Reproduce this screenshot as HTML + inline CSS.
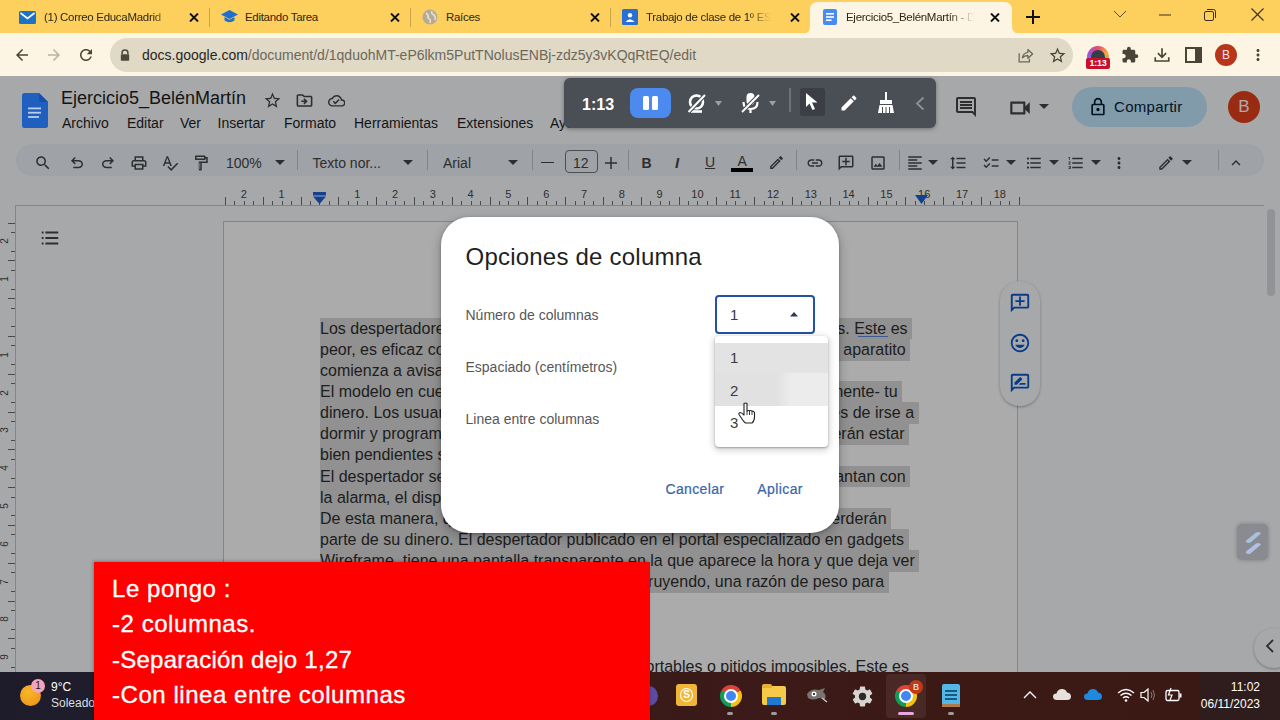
<!DOCTYPE html>
<html><head><meta charset="utf-8">
<style>
*{box-sizing:border-box;margin:0;padding:0}
html,body{width:1280px;height:720px;overflow:hidden;background:#f9fbfd;font-family:"Liberation Sans",sans-serif;position:relative}
.a{position:absolute}
svg{display:block}
.tabs{left:0;top:0;width:1280px;height:33px;background:#fdd05e}
.tbar{left:0;top:33px;width:1280px;height:43px;background:#fcf5e3}
.tabt{font-size:11.5px;letter-spacing:-0.3px;line-height:1;color:#2e2616;white-space:nowrap;top:11.5px}
.tsep{width:1px;height:19px;top:8px;background:#c9a54a}
.omni{left:109.5px;top:38px;width:963.5px;height:33.7px;border-radius:17px;background:#dfd9c6}
.docs{left:0;top:76px;width:1280px;height:596px;background:#f9fbfd;overflow:hidden}
.menu{font-size:14px;color:#1f1f1f;top:38px;white-space:nowrap}
.pill{left:16px;top:68px;width:1248px;height:32px;border-radius:16px;background:#edf2fa}
.ti{top:74px}
.sep{width:1px;height:20px;top:74px;background:#c7c7c7}
.page{left:223px;top:145px;width:795px;height:520px;background:#fff;border-left:1px solid #c6c6c6;border-right:1px solid #c6c6c6;border-top:1px solid #c6c6c6}
.ln{left:320px;font-size:16.03px;color:#2e2e2e;white-space:nowrap;height:21.8px;line-height:21.13px}
.hl{background:#d9d9d9}
.overlay{left:0;top:76px;width:1280px;height:596px;background:rgba(0,0,0,0.33)}
.task{left:0;top:672px;width:1280px;height:48px;background:linear-gradient(90deg,#1e1c2b 0%,#1f1c2c 7.5%,#3a1a1a 50%,#3c1914 77%,#3a1914 93.7%,#2f1c1c 93.8%,#2f1c1c 100%)}
</style></head><body>

<!-- TAB STRIP -->
<div class="a tabs"></div>
<!-- active tab -->
<div class="a" style="left:802px;top:1px;width:218px;height:33px;">
  <svg width="218" height="33" viewBox="0 0 218 33"><path d="M0 33 Q8 33 8 25 L8 9 Q8 1 16 1 L202 1 Q210 1 210 9 L210 25 Q210 33 218 33 Z" fill="#fcf5e3"/></svg>
</div>
<!-- tab1 -->
<svg class="a" style="left:19px;top:11px" width="17" height="13" viewBox="0 0 17 13"><rect x="0" y="0" width="17" height="13" rx="1.5" fill="#1a73c8"/><path d="M1.5 2 L8.5 7.5 L15.5 2" stroke="#fff" stroke-width="1.6" fill="none"/></svg>
<div class="a tabt" style="left:44px;width:128px;overflow:hidden;-webkit-mask-image:linear-gradient(90deg,#000 85%,transparent)">(1) Correo EducaMadrid</div>
<svg class="a" style="left:189px;top:12.5px" width="10" height="9" viewBox="0 0 10 9"><path d="M1 0.5L9 8.5M9 0.5L1 8.5" stroke="#111" stroke-width="1.9"/></svg>
<div class="a tsep" style="left:209px"></div>
<!-- tab2 -->
<svg class="a" style="left:221px;top:10px" width="17" height="14" viewBox="0 0 17 14"><path d="M8.5 0 L17 4.5 L8.5 9 L0 4.5Z" fill="#1f6fd0"/><path d="M3.5 7 L3.5 10.5 Q8.5 14 13.5 10.5 L13.5 7 L8.5 9.7Z" fill="#1f6fd0"/></svg>
<div class="a tabt" style="left:245px">Editando Tarea</div>
<svg class="a" style="left:390px;top:12.5px" width="10" height="9" viewBox="0 0 10 9"><path d="M1 0.5L9 8.5M9 0.5L1 8.5" stroke="#111" stroke-width="1.9"/></svg>
<div class="a tsep" style="left:410px"></div>
<!-- tab3 -->
<svg class="a" style="left:422px;top:9px" width="16" height="16" viewBox="0 0 16 16"><circle cx="8" cy="8" r="7.5" fill="#b3aa9a"/><path d="M4 4 Q7 6 6 9 Q9 10 8 14 M10 2 Q9 5 12 6 Q14 8 13 11" stroke="#e8dcc0" stroke-width="1.8" fill="none"/></svg>
<div class="a tabt" style="left:446px">Raíces</div>
<svg class="a" style="left:590px;top:12.5px" width="10" height="9" viewBox="0 0 10 9"><path d="M1 0.5L9 8.5M9 0.5L1 8.5" stroke="#111" stroke-width="1.9"/></svg>
<div class="a tsep" style="left:610px"></div>
<!-- tab4 -->
<svg class="a" style="left:622px;top:9px" width="16" height="16" viewBox="0 0 16 16"><rect width="16" height="16" rx="1.5" fill="#2a6fd6"/><circle cx="8" cy="6.3" r="2.2" fill="#fff"/><path d="M3.5 13 Q8 7.5 12.5 13Z" fill="#fff"/></svg>
<div class="a tabt" style="left:646px;width:125px;overflow:hidden;-webkit-mask-image:linear-gradient(90deg,#000 82%,transparent)">Trabajo de clase de 1º ESO</div>
<svg class="a" style="left:790px;top:12.5px" width="10" height="9" viewBox="0 0 10 9"><path d="M1 0.5L9 8.5M9 0.5L1 8.5" stroke="#111" stroke-width="1.9"/></svg>
<!-- tab5 active -->
<svg class="a" style="left:822px;top:9px" width="16" height="16" viewBox="0 0 16 16"><rect x="1" y="0" width="14" height="16" rx="2" fill="#4a8af4"/><rect x="4" y="4" width="8" height="1.6" fill="#fff"/><rect x="4" y="7.2" width="8" height="1.6" fill="#fff"/><rect x="4" y="10.4" width="5.5" height="1.6" fill="#fff"/></svg>
<div class="a tabt" style="left:846px;width:128px;overflow:hidden;-webkit-mask-image:linear-gradient(90deg,#000 80%,transparent)">Ejercicio5_BelénMartín - Documentos</div>
<svg class="a" style="left:990px;top:12.5px" width="10" height="9" viewBox="0 0 10 9"><path d="M1 0.5L9 8.5M9 0.5L1 8.5" stroke="#111" stroke-width="1.9"/></svg>
<svg class="a" style="left:1026px;top:10px" width="14" height="14" viewBox="0 0 14 14"><path d="M7 0V14M0 7H14" stroke="#111" stroke-width="2"/></svg>
<!-- window controls -->
<svg class="a" style="left:1113px;top:10px" width="14" height="8" viewBox="0 0 14 8"><path d="M1 1L7 7L13 1" stroke="#5a4a20" stroke-width="1" fill="none"/></svg>
<svg class="a" style="left:1159px;top:14px" width="12" height="2" viewBox="0 0 12 2"><path d="M0 1H12" stroke="#3a3020" stroke-width="1"/></svg>
<svg class="a" style="left:1204px;top:9px" width="12" height="12" viewBox="0 0 12 12"><rect x="0.5" y="2.5" width="9" height="9" rx="1.5" fill="none" stroke="#3a3020"/><path d="M3 0.5H9.5Q11.5 0.5 11.5 2.5V9" fill="none" stroke="#3a3020"/></svg>
<svg class="a" style="left:1251px;top:8px" width="13" height="13" viewBox="0 0 13 13"><path d="M0.5 0.5L12.5 12.5M12.5 0.5L0.5 12.5" stroke="#3a3020" stroke-width="1.1"/></svg>

<div class="a tbar"></div>
<div class="a omni"></div>
<!-- nav buttons -->
<svg class="a" style="left:13px;top:46px" width="18" height="18" viewBox="0 0 24 24"><path d="M20 11H7.83l5.59-5.59L12 4l-8 8 8 8 1.41-1.41L7.83 13H20v-2z" fill="#4a4438"/></svg>
<svg class="a" style="left:45px;top:46px" width="18" height="18" viewBox="0 0 24 24"><path d="M12 4l-1.41 1.41L16.17 11H4v2h12.17l-5.58 5.59L12 20l8-8z" fill="#b9b2a2"/></svg>
<svg class="a" style="left:77px;top:46px" width="18" height="18" viewBox="0 0 24 24"><path d="M17.65 6.35C16.2 4.9 14.21 4 12 4c-4.42 0-7.99 3.58-7.99 8s3.57 8 7.99 8c3.73 0 6.84-2.55 7.73-6h-2.08c-.82 2.33-3.04 4-5.65 4-3.31 0-6-2.69-6-6s2.69-6 6-6c1.66 0 3.14.69 4.22 1.78L13 11h7V4l-2.35 2.35z" fill="#4a4438"/></svg>
<!-- lock -->
<svg class="a" style="left:120px;top:49px" width="10" height="12" viewBox="0 0 12 14"><path d="M2.5 6V4.2Q2.5 1 6 1Q9.5 1 9.5 4.2V6" stroke="#4d473c" stroke-width="1.8" fill="none"/><rect x="1" y="6" width="10" height="8" rx="1" fill="#4d473c"/></svg>
<div class="a" style="left:142px;top:47px;font-size:14px;white-space:nowrap;color:#6e685c"><span style="color:#2a261e">docs.google.com</span>/document/d/1qduohMT-eP6lkm5PutTNolusENBj-zdz5y3vKQqRtEQ/edit</div>
<!-- share & star -->
<svg class="a" style="left:1016px;top:46px" width="19" height="19" viewBox="0 0 24 24"><path d="M4 9V20H17V16" stroke="#6c6658" stroke-width="1.6" fill="none"/><path d="M8 15Q9 9 15 8V4.5L21 10L15 15.5V12Q10.5 12 8 15Z" stroke="#6c6658" stroke-width="1.6" fill="none" stroke-linejoin="round"/></svg>
<svg class="a" style="left:1048px;top:46px" width="19" height="19" viewBox="0 0 24 24"><path d="M22 9.24l-7.19-.62L12 2 9.19 8.63 2 9.24l5.46 4.73L5.82 21 12 17.27 18.18 21l-1.63-7.03L22 9.24zM12 15.4l-3.76 2.27 1-4.28-3.32-2.88 4.38-.38L12 6.1l1.71 4.04 4.38.38-3.32 2.88 1 4.28L12 15.4z" fill="#4a4438"/></svg>
<!-- extension 1:13 -->
<div class="a" style="left:1087px;top:46px;width:22px;height:16px;border-radius:11px 11px 0 0;background:conic-gradient(#e94b6a,#f6a93b,#4c9cf0,#9a55d8,#e94b6a)"></div>
<div class="a" style="left:1091px;top:50px;width:14px;height:14px;border-radius:7px;background:#363c48"></div>
<div class="a" style="left:1086px;top:58px;width:24px;height:11px;background:#c8102e;border-radius:2px;color:#fff;font-size:9px;font-weight:700;line-height:11px;text-align:center;letter-spacing:-0.2px">1:13</div>
<svg class="a" style="left:1121px;top:46px" width="18" height="18" viewBox="0 0 24 24"><path d="M20.5 11H19V7c0-1.1-.9-2-2-2h-4V3.5C13 2.12 11.88 1 10.5 1S8 2.12 8 3.5V5H4c-1.1 0-1.99.9-1.99 2v3.8H3.5c1.49 0 2.7 1.21 2.7 2.7s-1.21 2.7-2.7 2.7H2V20c0 1.1.9 2 2 2h3.8v-1.5c0-1.49 1.21-2.7 2.7-2.7 1.49 0 2.7 1.21 2.7 2.7V22H17c1.1 0 2-.9 2-2v-4h1.5c1.38 0 2.5-1.12 2.5-2.5S21.88 11 20.5 11z" fill="#4a4438"/></svg>
<svg class="a" style="left:1153px;top:46px" width="18" height="18" viewBox="0 0 24 24"><path d="M12 3V15M6.5 9.5L12 15L17.5 9.5M3 15V20H21V15" stroke="#4a4438" stroke-width="2.2" fill="none"/></svg>
<svg class="a" style="left:1185px;top:47px" width="17" height="16" viewBox="0 0 17 16"><rect x="1" y="1" width="15" height="14" fill="none" stroke="#4a4438" stroke-width="2"/><rect x="10" y="1" width="6" height="14" fill="#4a4438"/></svg>
<div class="a" style="left:1215px;top:44px;width:22px;height:22px;border-radius:11px;background:#b8351a;color:#fde;font-size:12px;line-height:22px;text-align:center">B</div>
<svg class="a" style="left:1249px;top:46px" width="18" height="18" viewBox="0 0 24 24"><path d="M12 8c1.1 0 2-.9 2-2s-.9-2-2-2-2 .9-2 2 .9 2 2 2zm0 2c-1.1 0-2 .9-2 2s.9 2 2 2 2-.9 2-2-.9-2-2-2zm0 6c-1.1 0-2 .9-2 2s.9 2 2 2 2-.9 2-2-.9-2-2-2z" fill="#4a4438"/></svg>

<!-- DOCS -->
<div class="a docs">
  <div class="a page"></div>
<div class="a ln hl" style="top:241.70px;width:592.0px;overflow:hidden"><span>Los despertadores con melodías insoportables</span><span class="a" style="right:4.45px;top:0">insoportables o pitidos imposibles. Este es</span></div>
<div class="a" style="left:858px;top:259.5px;width:30px;height:1.3px;background:#5a86d6"></div>
<div class="a ln hl" style="top:262.83px;width:590.0px;overflow:hidden"><span>peor, es eficaz como pocos y te obliga</span><span class="a" style="right:4.45px;top:0">levantarte de la cama. Este aparatito</span></div>
<div class="a ln hl" style="top:283.96px;width:440.0px;overflow:hidden"><span>comienza a avisar con sonidos hasta que</span></div>
<div class="a ln hl" style="top:305.09px;width:582.0px;overflow:hidden"><span>El modelo en cuestión es capaz de destruir</span><span class="a" style="right:4.45px;top:0">destruir -literalmente- tu</span></div>
<div class="a ln hl" style="top:326.22px;width:598.5px;overflow:hidden"><span>dinero. Los usuarios deben introducir</span><span class="a" style="right:4.45px;top:0">un billete antes de irse a</span></div>
<div class="a ln hl" style="top:347.35px;width:589.0px;overflow:hidden"><span>dormir y programar la alarma. Por la mañana</span><span class="a" style="right:4.45px;top:0">mañana, deberán estar</span></div>
<div class="a ln hl" style="top:368.48px;width:400.0px;overflow:hidden"><span>bien pendientes si no quieren perderlo.</span></div>
<div class="a ln hl" style="top:389.61px;width:590.0px;overflow:hidden"><span>El despertador se activa y si los usuarios</span><span class="a" style="right:4.45px;top:0">usuarios no se levantan con</span></div>
<div class="a ln hl" style="top:410.74px;width:450.0px;overflow:hidden"><span>la alarma, el dispositivo tritura el billete.</span></div>
<div class="a ln hl" style="top:431.87px;width:571.0px;overflow:hidden"><span>De esta manera, quienes se queden dormidos</span><span class="a" style="right:4.45px;top:0">dormidos perderán</span></div>
<div class="a ln" style="top:453.00px"><span class="hl" style="padding-right:4.45px;display:inline-block;height:21.8px">parte de su dinero. El despertador publicado en el portal especializado en gadgets</span></div>
<div class="a ln" style="top:474.13px"><span class="hl" style="padding-right:4.45px;display:inline-block;height:21.8px">Wireframe, tiene una pantalla transparente en la que aparece la hora y que deja ver</span></div>
<div class="a ln hl" style="top:495.26px;width:568.5px;overflow:hidden"><span class="a" style="right:4.45px;top:0">El aparato tritura el billete poco a poco y se ve cómo el billete se va destruyendo, una razón de peso para</span></div>
<div class="a ln" style="top:516.39px"><span class="hl" style="padding-right:4.45px;display:inline-block;height:21.8px">levantarse.</span></div>
<div class="a ln" style="top:579.78px;width:589px;height:22px"><span class="a" style="right:0;top:0">Los despertadores con sonidos estridentes, melodías insoportables o pitidos imposibles. Este es</span></div>
<div class="a" style="left:61px;top:12.76px;font-size:18px;line-height:1;white-space:nowrap;color:#1f1f1f;">Ejercicio5_BelénMartín</div>
<svg class="a" style="left:263px;top:15px" width="19" height="19" viewBox="0 0 24 24"><path d="M22 9.24l-7.19-.62L12 2 9.19 8.63 2 9.24l5.46 4.73L5.82 21 12 17.27 18.18 21l-1.63-7.03L22 9.24zM12 15.4l-3.76 2.27 1-4.28-3.32-2.88 4.38-.38L12 6.1l1.71 4.04 4.38.38-3.32 2.88 1 4.28L12 15.4z" fill="#444746"/></svg>
<svg class="a" style="left:295px;top:15px" width="19" height="19" viewBox="0 0 24 24"><path d="M20 6h-8l-2-2H4c-1.1 0-1.99.9-1.99 2L2 18c0 1.1.9 2 2 2h16c1.1 0 2-.9 2-2V8c0-1.1-.9-2-2-2zm0 12H4V6h5.17l2 2H20v10zm-7.84-6H8v2h4.16l-1.59 1.59L11.99 17 16 13.01 11.99 9l-1.41 1.41L12.16 12z" fill="#444746"/></svg>
<svg class="a" style="left:327.5px;top:15.5px" width="17.5" height="17.5" viewBox="0 0 24 24"><path d="M19.35 10.04C18.67 6.59 15.64 4 12 4 9.11 4 6.6 5.64 5.35 8.04 2.34 8.36 0 10.91 0 14c0 3.31 2.69 6 6 6h13c2.76 0 5-2.24 5-5 0-2.64-2.05-4.78-4.65-4.96zM19 18H6c-2.21 0-4-1.79-4-4 0-2.05 1.53-3.76 3.56-3.97l1.07-.11.5-.95C8.08 7.14 9.94 6 12 6c2.62 0 4.88 1.86 5.39 4.43l.3 1.5 1.53.11c1.56.1 2.78 1.41 2.78 2.96 0 1.650-1.35 3-3 3zm-9-3.82l-2.09-2.09L6.5 13.5 10 17l6.01-6.01-1.41-1.41z" fill="#444746"/></svg>
<div class="a" style="left:62px;top:39.65px;font-size:14px;line-height:1;white-space:nowrap;color:#1f1f1f;">Archivo</div>
<div class="a" style="left:127px;top:39.65px;font-size:14px;line-height:1;white-space:nowrap;color:#1f1f1f;">Editar</div>
<div class="a" style="left:180px;top:39.65px;font-size:14px;line-height:1;white-space:nowrap;color:#1f1f1f;">Ver</div>
<div class="a" style="left:217.5px;top:39.65px;font-size:14px;line-height:1;white-space:nowrap;color:#1f1f1f;">Insertar</div>
<div class="a" style="left:284px;top:39.65px;font-size:14px;line-height:1;white-space:nowrap;color:#1f1f1f;">Formato</div>
<div class="a" style="left:354px;top:39.65px;font-size:14px;line-height:1;white-space:nowrap;color:#1f1f1f;">Herramientas</div>
<div class="a" style="left:457px;top:39.65px;font-size:14px;line-height:1;white-space:nowrap;color:#1f1f1f;">Extensiones</div>
<div class="a" style="left:550px;top:39.65px;font-size:14px;line-height:1;white-space:nowrap;color:#1f1f1f;">Ayuda</div>
<svg class="a" style="left:954px;top:19px" width="24" height="24" viewBox="0 0 24 24"><path d="M21.99 4c0-1.1-.89-2-1.99-2H4c-1.1 0-2 .9-2 2v12c0 1.1.9 2 2 2h14l4 4-.01-18zM20 4v13.17L18.830 16H4V4h16zM6 12h12v2H6zm0-3h12v2H6zm0-3h12v2H6z" fill="#444746"/></svg>
<svg class="a" style="left:1007px;top:19px" width="26" height="26" viewBox="0 0 24 24"><path d="M15 8v8H5V8h10m1-2H4c-.55 0-1 .45-1 1v10c0 .55.45 1 1 1h12c.55 0 1-.45 1-1v-3.5l4 4v-11l-4 4V7c0-.55-.45-1-1-1z" fill="#444746"/></svg>
<svg class="a" style="left:1039px;top:28px" width="10" height="5" viewBox="0 0 10 5"><path d="M0 0H10L5 5Z" fill="#444746"/></svg>
<div class="a" style="left:1072px;top:11px;width:135px;height:40px;border-radius:20px;background:#c2e7ff"></div>
<svg class="a" style="left:1088px;top:21px" width="20" height="20" viewBox="0 0 24 24"><path d="M18 8h-1V6c0-2.76-2.24-5-5-5S7 3.24 7 6v2H6c-1.1 0-2 .9-2 2v10c0 1.1.9 2 2 2h12c1.1 0 2-.9 2-2V10c0-1.1-.9-2-2-2zM9 6c0-1.66 1.34-3 3-3s3 1.34 3 3v2H9V6zm9 14H6V10h12v10zm-6-3c1.1 0 2-.9 2-2s-.9-2-2-2-2 .9-2 2 .9 2 2 2z" fill="#001d35"/></svg>
<div class="a" style="left:1114px;top:23.30px;font-size:15px;line-height:1;white-space:nowrap;color:#001d35;letter-spacing:0.3px">Compartir</div>
<div class="a" style="left:1228px;top:15px;width:32px;height:32px;border-radius:16px;background:#e3401a;color:#fff;font-size:17px;line-height:32px;text-align:center">B</div>
<div class="a pill"></div>
<svg class="a" style="left:33.5px;top:77.5px" width="18" height="18" viewBox="0 0 24 24"><path d="M15.5 14h-.79l-.28-.27C15.41 12.59 16 11.11 16 9.5 16 5.91 13.09 3 9.5 3S3 5.91 3 9.5 5.91 16 9.5 16c1.61 0 3.09-.59 4.230-1.57l.27.28v.79l5 4.99L20.49 19l-4.99-5zm-6 0C7.01 14 5 11.99 5 9.5S7.01 5 9.5 5 14 7.01 14 9.5 11.99 14 9.5 14z" fill="#444746"/></svg>
<svg class="a" style="left:68.0px;top:77.5px" width="18" height="18" viewBox="0 0 24 24"><path d="M7 19v-2h7.1q1.575 0 2.737-1 1.163-1 1.163-2.5T16.837 11Q15.675 10 14.1 10H7.8l2.6 2.6L9 14 4 9l5-5 1.4 1.4L7.8 8h6.3q2.425 0 4.163 1.575Q20 11.15 20 13.5q0 2.350-1.737 3.925Q16.525 19 14.1 19Z" fill="#444746"/></svg>
<svg class="a" style="left:98.5px;top:77.5px" width="18" height="18" viewBox="0 0 24 24"><path d="M9.9 19q-2.425 0-4.162-1.575Q4 15.850 4 13.5q0-2.35 1.738-3.925Q7.475 8 9.9 8h6.3l-2.6-2.6L15 4l5 5-5 5-1.4-1.4 2.6-2.6H9.9q-1.575 0-2.737 1Q6 12 6 13.500T7.163 16q1.162 1 2.737 1H17v2Z" fill="#444746"/></svg>
<svg class="a" style="left:130.0px;top:77.5px" width="18" height="18" viewBox="0 0 24 24"><path d="M19 8h-1V3H6v5H5c-1.66 0-3 1.34-3 3v6h4v4h12v-4h4v-6c0-1.66-1.34-3-3-3zM8 5h8v3H8V5zm8 12v2H8v-4h8v2zm2-2v-2H6v2H4v-4c0-.55.45-1 1-1h14c.55 0 1 .45 1 1v4h-2z" fill="#444746"/></svg>
<svg class="a" style="left:161.0px;top:77.5px" width="18" height="18" viewBox="0 0 24 24"><path d="M12.45 16h2.09L9.43 3H7.57L2.46 16h2.09l1.12-3h5.64l1.14 3zm-6.02-5L8.5 5.48 10.57 11H6.43zm15.16.59l-8.09 8.09L9.83 16l-1.41 1.41 5.09 5.09L23 13l-1.41-1.41z" fill="#444746"/></svg>
<svg class="a" style="left:191.5px;top:77.5px" width="18" height="18" viewBox="0 0 24 24"><path d="M18 4V3c0-.55-.45-1-1-1H5c-.55 0-1 .45-1 1v4c0 .55.45 1 1 1h12c.55 0 1-.45 1-1V6h1v4H9v11c0 .55.45 1 1 1h2c.55 0 1-.45 1-1v-9h8V4h-3zM16 6H6V4h10zM11 20h-1v-8h1z" fill="#444746"/></svg>
<div class="a" style="left:226px;top:79.65px;font-size:14px;line-height:1;white-space:nowrap;color:#444746;">100%</div>
<svg class="a" style="left:275px;top:83.5px" width="10" height="5" viewBox="0 0 10 5"><path d="M0 0H10L5 5Z" fill="#444746"/></svg>
<div class="a sep" style="left:297px"></div>
<div class="a" style="left:312.5px;top:79.65px;font-size:14px;line-height:1;white-space:nowrap;color:#444746;">Texto nor...</div>
<svg class="a" style="left:403px;top:83.5px" width="10" height="5" viewBox="0 0 10 5"><path d="M0 0H10L5 5Z" fill="#444746"/></svg>
<div class="a sep" style="left:427px"></div>
<div class="a" style="left:443px;top:79.65px;font-size:14px;line-height:1;white-space:nowrap;color:#444746;">Arial</div>
<svg class="a" style="left:508px;top:83.5px" width="10" height="5" viewBox="0 0 10 5"><path d="M0 0H10L5 5Z" fill="#444746"/></svg>
<div class="a sep" style="left:532px"></div>
<div class="a" style="left:541px;top:85.75px;width:13px;height:1.5px;background:#444746"></div>
<div class="a" style="left:564.5px;top:74px;width:33px;height:23px;border:1px solid #747775;border-radius:4px"></div>
<div class="a" style="left:573px;top:79.65px;font-size:14px;line-height:1;white-space:nowrap;color:#444746;">12</div>
<svg class="a" style="left:605px;top:80.5px" width="12" height="12" viewBox="0 0 12 12"><path d="M6 0V12M0 6H12" stroke="#444746" stroke-width="1.5"/></svg>
<div class="a sep" style="left:628px"></div>
<div class="a" style="left:641.5px;top:79.65px;font-size:14px;line-height:1;white-space:nowrap;color:#444746;font-weight:700">B</div>
<div class="a" style="left:675px;top:78.80px;font-size:15px;line-height:1;white-space:nowrap;color:#444746;font-weight:700;font-style:italic">I</div>
<div class="a" style="left:705px;top:78.65px;font-size:14px;line-height:1;white-space:nowrap;color:#444746;text-decoration:underline">U</div>
<div class="a" style="left:737.5px;top:77.65px;font-size:14px;line-height:1;white-space:nowrap;color:#444746;">A</div>
<div class="a" style="left:731px;top:92px;width:22px;height:4px;background:#000"></div>
<svg class="a" style="left:767.5px;top:78.0px" width="17" height="17" viewBox="0 0 24 24"><path d="M3 17.25V21h3.75L17.81 9.94l-3.75-3.75L3 17.25zM5.92 19H5v-.92l9.06-9.06.92.92L5.92 19zM20.71 5.63l-2.340-2.34c-.2-.2-.45-.29-.71-.29s-.51.1-.7.29l-1.83 1.83 3.75 3.75 1.83-1.83c.39-.39.39-1.02 0-1.41z" fill="#444746"/></svg>
<div class="a sep" style="left:795.5px"></div>
<svg class="a" style="left:806.0px;top:77.5px" width="18" height="18" viewBox="0 0 24 24"><path d="M3.9 12c0-1.71 1.39-3.1 3.1-3.1h4V7H7c-2.76 0-5 2.24-5 5s2.24 5 5 5h4v-1.9H7c-1.71 0-3.1-1.39-3.1-3.1zM8 13h8v-2H8v2zm9-6h-4v1.9h4c1.71 0 3.1 1.39 3.1 3.1s-1.39 3.1-3.1 3.1h-4V17h4c2.76 0 5-2.24 5-5s-2.24-5-5-5z" fill="#444746"/></svg>
<svg class="a" style="left:837.0px;top:77.5px" width="18" height="18" viewBox="0 0 24 24"><path d="M20 2H4c-1.1 0-2 .9-2 2v18l4-4h14c1.1 0 2-.9 2-2V4c0-1.1-.9-2-2-2zm0 14H5.17L4 17.17V4h16v12zM13 5h-2v4H7v2h4v4h2v-4h4V9h-4z" fill="#444746"/></svg>
<svg class="a" style="left:868.5px;top:77.5px" width="18" height="18" viewBox="0 0 24 24"><path d="M19 5v14H5V5h14m0-2H5c-1.1 0-2 .9-2 2v14c0 1.1.9 2 2 2h14c1.1 0 2-.9 2-2V5c0-1.1-.9-2-2-2zm-4.86 8.86l-3 3.87L9 13.14 6 17h12l-3.86-5.14z" fill="#444746"/></svg>
<div class="a sep" style="left:898.5px"></div>
<svg class="a" style="left:906.0px;top:77.5px" width="18" height="18" viewBox="0 0 24 24"><path d="M15 15H3v2h12v-2zm0-8H3v2h12V7zM3 13h18v-2H3v2zm0 8h18v-2H3v2zM3 3v2h18V3H3z" fill="#444746"/></svg>
<svg class="a" style="left:928px;top:83.5px" width="10" height="5" viewBox="0 0 10 5"><path d="M0 0H10L5 5Z" fill="#444746"/></svg>
<svg class="a" style="left:948.5px;top:77.5px" width="18" height="18" viewBox="0 0 24 24"><path d="M6 7h2.5L5 3.5 1.5 7H4v10H1.5L5 20.5 8.5 17H6V7zm4-2v2h12V5H10zm0 14h12v-2H10v2zm0-6h12v-2H10v2z" fill="#444746"/></svg>
<svg class="a" style="left:982.0px;top:77.5px" width="18" height="18" viewBox="0 0 24 24"><path d="M22 7h-9v2h9V7zm0 8h-9v2h9v-2zM5.54 11L2 7.46l1.41-1.41 2.12 2.12 4.24-4.24 1.41 1.41L5.54 11zm0 8L2 15.46l1.41-1.41 2.12 2.12 4.24-4.24 1.41 1.41L5.54 19z" fill="#444746"/></svg>
<svg class="a" style="left:1006px;top:83.5px" width="10" height="5" viewBox="0 0 10 5"><path d="M0 0H10L5 5Z" fill="#444746"/></svg>
<svg class="a" style="left:1025.0px;top:77.5px" width="18" height="18" viewBox="0 0 24 24"><path d="M4 10.5c-.83 0-1.5.67-1.5 1.5s.67 1.5 1.5 1.5 1.5-.67 1.5-1.5-.67-1.5-1.5-1.5zm0-6c-.83 0-1.5.67-1.5 1.5S3.17 7.5 4 7.5 5.5 6.83 5.5 6 4.830 4.5 4 4.5zm0 12c-.83 0-1.5.68-1.5 1.5s.68 1.5 1.5 1.5 1.5-.68 1.5-1.5-.67-1.5-1.5-1.5zM7 19h14v-2H7v2zm0-6h14v-2H7v2zm0-8v2h14V5H7z" fill="#444746"/></svg>
<svg class="a" style="left:1049px;top:83.5px" width="10" height="5" viewBox="0 0 10 5"><path d="M0 0H10L5 5Z" fill="#444746"/></svg>
<svg class="a" style="left:1067.0px;top:77.5px" width="18" height="18" viewBox="0 0 24 24"><path d="M2 17h2v.5H3v1h1v.5H2v1h3v-4H2v1zm1-9h1V4H2v1h1v3zm-1 3h1.8L2 13.1v.9h3v-1H3.2L5 10.9V10H2v1zm5-6v2h14V5H7zm0 14h14v-2H7v2zm0-6h14v-2H7v2z" fill="#444746"/></svg>
<svg class="a" style="left:1091px;top:83.5px" width="10" height="5" viewBox="0 0 10 5"><path d="M0 0H10L5 5Z" fill="#444746"/></svg>
<svg class="a" style="left:1110.0px;top:77.5px" width="18" height="18" viewBox="0 0 24 24"><path d="M12 8c1.1 0 2-.9 2-2s-.9-2-2-2-2 .9-2 2 .9 2 2 2zm0 2c-1.1 0-2 .9-2 2s.9 2 2 2 2-.9 2-2-.9-2-2-2zm0 6c-1.1 0-2 .9-2 2s.9 2 2 2 2-.9 2-2-.9-2-2-2z" fill="#444746"/></svg>
<svg class="a" style="left:1157.0px;top:77.5px" width="18" height="18" viewBox="0 0 24 24"><path d="M3 17.25V21h3.75L17.81 9.94l-3.75-3.75L3 17.25zM5.92 19H5v-.92l9.06-9.06.92.92L5.92 19zM20.71 5.63l-2.340-2.34c-.2-.2-.45-.29-.71-.29s-.51.1-.7.29l-1.83 1.83 3.75 3.75 1.83-1.83c.39-.39.39-1.02 0-1.41z" fill="#444746"/></svg>
<svg class="a" style="left:1182px;top:83.5px" width="10" height="5" viewBox="0 0 10 5"><path d="M0 0H10L5 5Z" fill="#444746"/></svg>
<div class="a sep" style="left:1217.5px"></div>
<svg class="a" style="left:1227.0px;top:77.5px" width="18" height="18" viewBox="0 0 24 24"><path d="M12 8l-6 6 1.41 1.41L12 10.83l4.59 4.58L18 14z" fill="#444746"/></svg>
<div class="a" style="left:15px;top:129px;width:1249px;height:1px;background:#c7c7c7"></div>
<div class="a" style="left:224.9px;top:121px;width:1px;height:8px;background:#6f6f6f"></div>
<div class="a" style="left:234.3px;top:125px;width:1px;height:4px;background:#6f6f6f"></div>
<div class="a" style="left:233.8px;top:113px;width:20px;text-align:center;font-size:11px;line-height:11px;color:#474747">2</div>
<div class="a" style="left:243.8px;top:125px;width:1px;height:4px;background:#6f6f6f"></div>
<div class="a" style="left:253.2px;top:125px;width:1px;height:4px;background:#6f6f6f"></div>
<div class="a" style="left:262.7px;top:121px;width:1px;height:8px;background:#6f6f6f"></div>
<div class="a" style="left:272.1px;top:125px;width:1px;height:4px;background:#6f6f6f"></div>
<div class="a" style="left:271.6px;top:113px;width:20px;text-align:center;font-size:11px;line-height:11px;color:#474747">1</div>
<div class="a" style="left:281.6px;top:125px;width:1px;height:4px;background:#6f6f6f"></div>
<div class="a" style="left:291.0px;top:125px;width:1px;height:4px;background:#6f6f6f"></div>
<div class="a" style="left:300.5px;top:121px;width:1px;height:8px;background:#6f6f6f"></div>
<div class="a" style="left:309.9px;top:125px;width:1px;height:4px;background:#6f6f6f"></div>
<div class="a" style="left:319.4px;top:125px;width:1px;height:4px;background:#6f6f6f"></div>
<div class="a" style="left:328.8px;top:125px;width:1px;height:4px;background:#6f6f6f"></div>
<div class="a" style="left:338.3px;top:121px;width:1px;height:8px;background:#6f6f6f"></div>
<div class="a" style="left:347.8px;top:125px;width:1px;height:4px;background:#6f6f6f"></div>
<div class="a" style="left:347.2px;top:113px;width:20px;text-align:center;font-size:11px;line-height:11px;color:#474747">1</div>
<div class="a" style="left:357.2px;top:125px;width:1px;height:4px;background:#6f6f6f"></div>
<div class="a" style="left:366.6px;top:125px;width:1px;height:4px;background:#6f6f6f"></div>
<div class="a" style="left:376.1px;top:121px;width:1px;height:8px;background:#6f6f6f"></div>
<div class="a" style="left:385.5px;top:125px;width:1px;height:4px;background:#6f6f6f"></div>
<div class="a" style="left:385.0px;top:113px;width:20px;text-align:center;font-size:11px;line-height:11px;color:#474747">2</div>
<div class="a" style="left:395.0px;top:125px;width:1px;height:4px;background:#6f6f6f"></div>
<div class="a" style="left:404.4px;top:125px;width:1px;height:4px;background:#6f6f6f"></div>
<div class="a" style="left:413.9px;top:121px;width:1px;height:8px;background:#6f6f6f"></div>
<div class="a" style="left:423.3px;top:125px;width:1px;height:4px;background:#6f6f6f"></div>
<div class="a" style="left:422.8px;top:113px;width:20px;text-align:center;font-size:11px;line-height:11px;color:#474747">3</div>
<div class="a" style="left:432.8px;top:125px;width:1px;height:4px;background:#6f6f6f"></div>
<div class="a" style="left:442.2px;top:125px;width:1px;height:4px;background:#6f6f6f"></div>
<div class="a" style="left:451.7px;top:121px;width:1px;height:8px;background:#6f6f6f"></div>
<div class="a" style="left:461.1px;top:125px;width:1px;height:4px;background:#6f6f6f"></div>
<div class="a" style="left:460.6px;top:113px;width:20px;text-align:center;font-size:11px;line-height:11px;color:#474747">4</div>
<div class="a" style="left:470.6px;top:125px;width:1px;height:4px;background:#6f6f6f"></div>
<div class="a" style="left:480.0px;top:125px;width:1px;height:4px;background:#6f6f6f"></div>
<div class="a" style="left:489.5px;top:121px;width:1px;height:8px;background:#6f6f6f"></div>
<div class="a" style="left:498.9px;top:125px;width:1px;height:4px;background:#6f6f6f"></div>
<div class="a" style="left:498.4px;top:113px;width:20px;text-align:center;font-size:11px;line-height:11px;color:#474747">5</div>
<div class="a" style="left:508.4px;top:125px;width:1px;height:4px;background:#6f6f6f"></div>
<div class="a" style="left:517.8px;top:125px;width:1px;height:4px;background:#6f6f6f"></div>
<div class="a" style="left:527.3px;top:121px;width:1px;height:8px;background:#6f6f6f"></div>
<div class="a" style="left:536.8px;top:125px;width:1px;height:4px;background:#6f6f6f"></div>
<div class="a" style="left:536.2px;top:113px;width:20px;text-align:center;font-size:11px;line-height:11px;color:#474747">6</div>
<div class="a" style="left:546.2px;top:125px;width:1px;height:4px;background:#6f6f6f"></div>
<div class="a" style="left:555.6px;top:125px;width:1px;height:4px;background:#6f6f6f"></div>
<div class="a" style="left:565.1px;top:121px;width:1px;height:8px;background:#6f6f6f"></div>
<div class="a" style="left:574.5px;top:125px;width:1px;height:4px;background:#6f6f6f"></div>
<div class="a" style="left:574.0px;top:113px;width:20px;text-align:center;font-size:11px;line-height:11px;color:#474747">7</div>
<div class="a" style="left:584.0px;top:125px;width:1px;height:4px;background:#6f6f6f"></div>
<div class="a" style="left:593.4px;top:125px;width:1px;height:4px;background:#6f6f6f"></div>
<div class="a" style="left:602.9px;top:121px;width:1px;height:8px;background:#6f6f6f"></div>
<div class="a" style="left:612.3px;top:125px;width:1px;height:4px;background:#6f6f6f"></div>
<div class="a" style="left:611.8px;top:113px;width:20px;text-align:center;font-size:11px;line-height:11px;color:#474747">8</div>
<div class="a" style="left:621.8px;top:125px;width:1px;height:4px;background:#6f6f6f"></div>
<div class="a" style="left:631.2px;top:125px;width:1px;height:4px;background:#6f6f6f"></div>
<div class="a" style="left:640.7px;top:121px;width:1px;height:8px;background:#6f6f6f"></div>
<div class="a" style="left:650.1px;top:125px;width:1px;height:4px;background:#6f6f6f"></div>
<div class="a" style="left:649.6px;top:113px;width:20px;text-align:center;font-size:11px;line-height:11px;color:#474747">9</div>
<div class="a" style="left:659.6px;top:125px;width:1px;height:4px;background:#6f6f6f"></div>
<div class="a" style="left:669.0px;top:125px;width:1px;height:4px;background:#6f6f6f"></div>
<div class="a" style="left:678.5px;top:121px;width:1px;height:8px;background:#6f6f6f"></div>
<div class="a" style="left:687.9px;top:125px;width:1px;height:4px;background:#6f6f6f"></div>
<div class="a" style="left:687.4px;top:113px;width:20px;text-align:center;font-size:11px;line-height:11px;color:#474747">10</div>
<div class="a" style="left:697.4px;top:125px;width:1px;height:4px;background:#6f6f6f"></div>
<div class="a" style="left:706.8px;top:125px;width:1px;height:4px;background:#6f6f6f"></div>
<div class="a" style="left:716.3px;top:121px;width:1px;height:8px;background:#6f6f6f"></div>
<div class="a" style="left:725.8px;top:125px;width:1px;height:4px;background:#6f6f6f"></div>
<div class="a" style="left:725.2px;top:113px;width:20px;text-align:center;font-size:11px;line-height:11px;color:#474747">11</div>
<div class="a" style="left:735.2px;top:125px;width:1px;height:4px;background:#6f6f6f"></div>
<div class="a" style="left:744.6px;top:125px;width:1px;height:4px;background:#6f6f6f"></div>
<div class="a" style="left:754.1px;top:121px;width:1px;height:8px;background:#6f6f6f"></div>
<div class="a" style="left:763.5px;top:125px;width:1px;height:4px;background:#6f6f6f"></div>
<div class="a" style="left:763.0px;top:113px;width:20px;text-align:center;font-size:11px;line-height:11px;color:#474747">12</div>
<div class="a" style="left:773.0px;top:125px;width:1px;height:4px;background:#6f6f6f"></div>
<div class="a" style="left:782.4px;top:125px;width:1px;height:4px;background:#6f6f6f"></div>
<div class="a" style="left:791.9px;top:121px;width:1px;height:8px;background:#6f6f6f"></div>
<div class="a" style="left:801.3px;top:125px;width:1px;height:4px;background:#6f6f6f"></div>
<div class="a" style="left:800.8px;top:113px;width:20px;text-align:center;font-size:11px;line-height:11px;color:#474747">13</div>
<div class="a" style="left:810.8px;top:125px;width:1px;height:4px;background:#6f6f6f"></div>
<div class="a" style="left:820.2px;top:125px;width:1px;height:4px;background:#6f6f6f"></div>
<div class="a" style="left:829.7px;top:121px;width:1px;height:8px;background:#6f6f6f"></div>
<div class="a" style="left:839.1px;top:125px;width:1px;height:4px;background:#6f6f6f"></div>
<div class="a" style="left:838.6px;top:113px;width:20px;text-align:center;font-size:11px;line-height:11px;color:#474747">14</div>
<div class="a" style="left:848.6px;top:125px;width:1px;height:4px;background:#6f6f6f"></div>
<div class="a" style="left:858.0px;top:125px;width:1px;height:4px;background:#6f6f6f"></div>
<div class="a" style="left:867.5px;top:121px;width:1px;height:8px;background:#6f6f6f"></div>
<div class="a" style="left:876.9px;top:125px;width:1px;height:4px;background:#6f6f6f"></div>
<div class="a" style="left:876.4px;top:113px;width:20px;text-align:center;font-size:11px;line-height:11px;color:#474747">15</div>
<div class="a" style="left:886.4px;top:125px;width:1px;height:4px;background:#6f6f6f"></div>
<div class="a" style="left:895.8px;top:125px;width:1px;height:4px;background:#6f6f6f"></div>
<div class="a" style="left:905.3px;top:121px;width:1px;height:8px;background:#6f6f6f"></div>
<div class="a" style="left:914.7px;top:125px;width:1px;height:4px;background:#6f6f6f"></div>
<div class="a" style="left:914.2px;top:113px;width:20px;text-align:center;font-size:11px;line-height:11px;color:#474747">16</div>
<div class="a" style="left:924.2px;top:125px;width:1px;height:4px;background:#6f6f6f"></div>
<div class="a" style="left:933.6px;top:125px;width:1px;height:4px;background:#6f6f6f"></div>
<div class="a" style="left:943.1px;top:121px;width:1px;height:8px;background:#6f6f6f"></div>
<div class="a" style="left:952.5px;top:125px;width:1px;height:4px;background:#6f6f6f"></div>
<div class="a" style="left:952.0px;top:113px;width:20px;text-align:center;font-size:11px;line-height:11px;color:#474747">17</div>
<div class="a" style="left:962.0px;top:125px;width:1px;height:4px;background:#6f6f6f"></div>
<div class="a" style="left:971.4px;top:125px;width:1px;height:4px;background:#6f6f6f"></div>
<div class="a" style="left:980.9px;top:121px;width:1px;height:8px;background:#6f6f6f"></div>
<div class="a" style="left:990.3px;top:125px;width:1px;height:4px;background:#6f6f6f"></div>
<div class="a" style="left:989.8px;top:113px;width:20px;text-align:center;font-size:11px;line-height:11px;color:#474747">18</div>
<div class="a" style="left:999.8px;top:125px;width:1px;height:4px;background:#6f6f6f"></div>
<div class="a" style="left:1009.2px;top:125px;width:1px;height:4px;background:#6f6f6f"></div>
<div class="a" style="left:1018.7px;top:121px;width:1px;height:8px;background:#6f6f6f"></div>
<svg class="a" style="left:313px;top:116px" width="13" height="12" viewBox="0 0 13 12"><rect x="0" y="0" width="13" height="3.5" fill="#1a62d6"/><path d="M0 4.5H13L6.5 12Z" fill="#1a62d6"/></svg>
<svg class="a" style="left:915px;top:119px" width="13" height="9" viewBox="0 0 13 9"><path d="M0 0H13L6.5 9Z" fill="#1a62d6"/></svg>
<div class="a" style="left:15px;top:129px;width:1px;height:470px;background:#c7c7c7"></div>
<div class="a" style="left:8px;top:146.5px;width:7px;height:1px;background:#6f6f6f"></div>
<div class="a" style="left:11px;top:155.9px;width:4px;height:1px;background:#6f6f6f"></div>
<div class="a" style="left:-1px;top:159.4px;width:12px;height:12px;text-align:center;font-size:10px;line-height:12px;color:#474747;transform:rotate(-90deg)">2</div>
<div class="a" style="left:11px;top:174.9px;width:4px;height:1px;background:#6f6f6f"></div>
<div class="a" style="left:8px;top:184.3px;width:7px;height:1px;background:#6f6f6f"></div>
<div class="a" style="left:11px;top:193.8px;width:4px;height:1px;background:#6f6f6f"></div>
<div class="a" style="left:-1px;top:197.2px;width:12px;height:12px;text-align:center;font-size:10px;line-height:12px;color:#474747;transform:rotate(-90deg)">1</div>
<div class="a" style="left:11px;top:212.7px;width:4px;height:1px;background:#6f6f6f"></div>
<div class="a" style="left:8px;top:222.1px;width:7px;height:1px;background:#6f6f6f"></div>
<div class="a" style="left:11px;top:231.6px;width:4px;height:1px;background:#6f6f6f"></div>
<div class="a" style="left:11px;top:250.4px;width:4px;height:1px;background:#6f6f6f"></div>
<div class="a" style="left:8px;top:259.9px;width:7px;height:1px;background:#6f6f6f"></div>
<div class="a" style="left:11px;top:269.4px;width:4px;height:1px;background:#6f6f6f"></div>
<div class="a" style="left:-1px;top:272.8px;width:12px;height:12px;text-align:center;font-size:10px;line-height:12px;color:#474747;transform:rotate(-90deg)">1</div>
<div class="a" style="left:11px;top:288.2px;width:4px;height:1px;background:#6f6f6f"></div>
<div class="a" style="left:8px;top:297.7px;width:7px;height:1px;background:#6f6f6f"></div>
<div class="a" style="left:11px;top:307.1px;width:4px;height:1px;background:#6f6f6f"></div>
<div class="a" style="left:-1px;top:310.6px;width:12px;height:12px;text-align:center;font-size:10px;line-height:12px;color:#474747;transform:rotate(-90deg)">2</div>
<div class="a" style="left:11px;top:326.1px;width:4px;height:1px;background:#6f6f6f"></div>
<div class="a" style="left:8px;top:335.5px;width:7px;height:1px;background:#6f6f6f"></div>
<div class="a" style="left:11px;top:344.9px;width:4px;height:1px;background:#6f6f6f"></div>
<div class="a" style="left:-1px;top:348.4px;width:12px;height:12px;text-align:center;font-size:10px;line-height:12px;color:#474747;transform:rotate(-90deg)">3</div>
<div class="a" style="left:11px;top:363.9px;width:4px;height:1px;background:#6f6f6f"></div>
<div class="a" style="left:8px;top:373.3px;width:7px;height:1px;background:#6f6f6f"></div>
<div class="a" style="left:11px;top:382.8px;width:4px;height:1px;background:#6f6f6f"></div>
<div class="a" style="left:-1px;top:386.2px;width:12px;height:12px;text-align:center;font-size:10px;line-height:12px;color:#474747;transform:rotate(-90deg)">4</div>
<div class="a" style="left:11px;top:401.6px;width:4px;height:1px;background:#6f6f6f"></div>
<div class="a" style="left:8px;top:411.1px;width:7px;height:1px;background:#6f6f6f"></div>
<div class="a" style="left:11px;top:420.5px;width:4px;height:1px;background:#6f6f6f"></div>
<div class="a" style="left:-1px;top:424.0px;width:12px;height:12px;text-align:center;font-size:10px;line-height:12px;color:#474747;transform:rotate(-90deg)">5</div>
<div class="a" style="left:11px;top:439.4px;width:4px;height:1px;background:#6f6f6f"></div>
<div class="a" style="left:8px;top:448.9px;width:7px;height:1px;background:#6f6f6f"></div>
<div class="a" style="left:11px;top:458.4px;width:4px;height:1px;background:#6f6f6f"></div>
<div class="a" style="left:-1px;top:461.8px;width:12px;height:12px;text-align:center;font-size:10px;line-height:12px;color:#474747;transform:rotate(-90deg)">6</div>
<div class="a" style="left:11px;top:477.2px;width:4px;height:1px;background:#6f6f6f"></div>
<div class="a" style="left:8px;top:486.7px;width:7px;height:1px;background:#6f6f6f"></div>
<div class="a" style="left:11px;top:496.1px;width:4px;height:1px;background:#6f6f6f"></div>
<div class="a" style="left:-1px;top:499.6px;width:12px;height:12px;text-align:center;font-size:10px;line-height:12px;color:#474747;transform:rotate(-90deg)">7</div>
<div class="a" style="left:11px;top:515.0px;width:4px;height:1px;background:#6f6f6f"></div>
<div class="a" style="left:8px;top:524.5px;width:7px;height:1px;background:#6f6f6f"></div>
<div class="a" style="left:11px;top:534.0px;width:4px;height:1px;background:#6f6f6f"></div>
<div class="a" style="left:-1px;top:537.4px;width:12px;height:12px;text-align:center;font-size:10px;line-height:12px;color:#474747;transform:rotate(-90deg)">8</div>
<div class="a" style="left:11px;top:552.8px;width:4px;height:1px;background:#6f6f6f"></div>
<div class="a" style="left:8px;top:562.3px;width:7px;height:1px;background:#6f6f6f"></div>
<div class="a" style="left:11px;top:571.8px;width:4px;height:1px;background:#6f6f6f"></div>
<div class="a" style="left:-1px;top:575.2px;width:12px;height:12px;text-align:center;font-size:10px;line-height:12px;color:#474747;transform:rotate(-90deg)">9</div>
<div class="a" style="left:11px;top:590.6px;width:4px;height:1px;background:#6f6f6f"></div>
<svg class="a" style="left:39px;top:151px" width="22" height="22" viewBox="0 0 24 24"><path d="M3 7h2V5H3v2zm0 6h2v-2H3v2zm0 6h2v-2H3v2zM7 7h14V5H7v2zm0 6h14v-2H7v2zm0 6h14v-2H7v2z" fill="#444746"/></svg>
<div class="a" style="left:1000px;top:205px;width:40px;height:125px;border-radius:20px;background:#f9fbfd;box-shadow:0 1px 3px rgba(0,0,0,.3)"></div>
<svg class="a" style="left:1009px;top:216px" width="22" height="22" viewBox="0 0 24 24"><path d="M20 2H4c-1.1 0-2 .9-2 2v18l4-4h14c1.1 0 2-.9 2-2V4c0-1.1-.9-2-2-2zm0 14H5.17L4 17.17V4h16v12zM13 5h-2v4H7v2h4v4h2v-4h4V9h-4z" fill="#0b57d0"/></svg>
<svg class="a" style="left:1009px;top:256px" width="22" height="22" viewBox="0 0 24 24"><path d="M11.99 2C6.47 2 2 6.48 2 12s4.47 10 9.99 10C17.52 22 22 17.52 22 12S17.52 2 11.99 2zM12 20c-4.42 0-8-3.58-8-8s3.58-8 8-8 8 3.58 8 8-3.58 8-8 8zm3.5-9c.83 0 1.5-.67 1.5-1.5S16.33 8 15.5 8 14 8.67 14 9.5s.67 1.5 1.5 1.5zm-7 0c.83 0 1.5-.67 1.5-1.5S9.33 8 8.5 8 7 8.67 7 9.5 7.67 11 8.5 11zm3.5 6.5c2.33 0 4.31-1.46 5.11-3.5H6.89c.8 2.04 2.78 3.5 5.11 3.5z" fill="#0b57d0"/></svg>
<svg class="a" style="left:1009px;top:296px" width="22" height="22" viewBox="0 0 24 24"><path d="M20 2H4c-1.1 0-1.99.9-1.99 2L2 22l4-4h14c1.1 0 2-.9 2-2V4c0-1.1-.9-2-2-2zm0 14H5.17l-.59.59-.58.58V4h16v12zm-9.5-2H18v-2h-5.5zm3.86-5.87c.2-.2.2-.51 0-.71l-1.77-1.77c-.2-.2-.51-.2-.71 0L6 11.53V14h2.47l5.89-5.87z" fill="#0b57d0"/></svg>
<div class="a" style="left:1267px;top:133px;width:8px;height:87px;border-radius:4px;background:#dadce0"></div>
<div class="a" style="left:1254px;top:552px;width:40px;height:40px;border-radius:20px;background:#f9fbfd;box-shadow:0 1px 3px rgba(0,0,0,.3)"></div>
<svg class="a" style="left:1265px;top:563px" width="10" height="14" viewBox="0 0 10 14"><path d="M8 1L2 7L8 13" stroke="#444" stroke-width="1.8" fill="none"/></svg>
</div>
<div class="a overlay"></div>
<svg class="a" style="left:21.5px;top:93px" width="26" height="35" viewBox="0 0 26 35"><path d="M2.5 0H17L26 9V32.5Q26 35 23.5 35H2.5Q0 35 0 32.5V2.5Q0 0 2.5 0Z" fill="#1f5fc0"/><path d="M17 0L26 9H19.5Q17 9 17 6.5Z" fill="#1a4fa8"/><rect x="6" y="14.5" width="13" height="1.8" fill="#b9cdec"/><rect x="6" y="18.8" width="13" height="1.8" fill="#b9cdec"/><rect x="6" y="23.1" width="11" height="1.8" fill="#b9cdec"/></svg>
<div class="a" style="left:1237px;top:524px;width:31px;height:36px;border-radius:5px;background:#898b90;box-shadow:0 0 4px rgba(0,0,0,.25)"></div>
<svg class="a" style="left:1243px;top:530px" width="20" height="25" viewBox="0 0 20 25"><path d="M2.5 11L13 2.5Q16.5 1 18 3.5L7.5 12.5Q4 14 2.5 11Z" fill="#a9c0de"/><path d="M2.5 22L13 13.5Q16.5 12 18 14.5L7.5 23.5Q4 25 2.5 22Z" fill="#b2bfe6"/></svg>

<div class="a" style="left:564px;top:78px;width:372px;height:49.5px;border-radius:6px;background:#4a4e55;box-shadow:0 1px 4px rgba(0,0,0,.35)"></div>
<div class="a" style="left:582px;top:96.66px;font-size:16px;line-height:1;white-space:nowrap;color:#fff;font-weight:700">1:13</div>
<div class="a" style="left:630px;top:87.5px;width:40.5px;height:30px;border-radius:8px;background:#4d8af0"></div>
<div class="a" style="left:643px;top:95.5px;width:5.5px;height:14px;border-radius:1.5px;background:#fff"></div>
<div class="a" style="left:652px;top:95.5px;width:5.5px;height:14px;border-radius:1.5px;background:#fff"></div>
<svg class="a" style="left:686px;top:93px" width="21" height="21" viewBox="0 0 21 21"><circle cx="10.5" cy="9" r="6.5" stroke="#fff" stroke-width="2.6" fill="none"/><path d="M5 18.5H16" stroke="#fff" stroke-width="2.6"/><path d="M2.5 19L19 2" stroke="#4a4e55" stroke-width="4"/><path d="M2.5 19L19 2" stroke="#fff" stroke-width="2"/></svg>
<svg class="a" style="left:715px;top:101px" width="7" height="5" viewBox="0 0 7 5"><path d="M0 0H7L3.5 5Z" fill="#9a9ea5"/></svg>
<svg class="a" style="left:740px;top:92px" width="21" height="22" viewBox="0 0 21 22"><rect x="6.5" y="1" width="8" height="12" rx="4" fill="#fff"/><path d="M3.5 10Q3.5 17 10.5 17Q17.5 17 17.5 10M10.5 17V21" stroke="#fff" stroke-width="2.2" fill="none"/><path d="M2 20L19 3" stroke="#4a4e55" stroke-width="4"/><path d="M2 20L19 3" stroke="#fff" stroke-width="2"/></svg>
<svg class="a" style="left:769px;top:101px" width="7" height="5" viewBox="0 0 7 5"><path d="M0 0H7L3.5 5Z" fill="#9a9ea5"/></svg>
<div class="a" style="left:789px;top:88px;width:1.5px;height:24px;background:#6c7077"></div>
<div class="a" style="left:800px;top:87.5px;width:25px;height:28px;border-radius:3px;background:#3b3e44"></div>
<svg class="a" style="left:805px;top:92px" width="14" height="19" viewBox="0 0 14 19"><path d="M1 1L1 15L4.5 11.5L7.5 18L10 17L7 10.5H12.5Z" fill="#fff"/></svg>
<svg class="a" style="left:839px;top:93px" width="20" height="20" viewBox="0 0 24 24"><path d="M3 17.25V21h3.75L17.81 9.94l-3.75-3.75L3 17.25zM20.71 5.63l-2.34-2.34c-.39-.39-1.02-.39-1.41 0l-1.83 1.83 3.75 3.75 1.83-1.83c.39-.39.39-1.02 0-1.41z" fill="#fff"/></svg>
<svg class="a" style="left:876px;top:92px" width="20" height="22" viewBox="0 0 20 22"><path d="M9 0H11V8H9Z" fill="#fff"/><path d="M4 8H16V12H4Z" fill="#fff"/><path d="M3.5 13H16.5L18 21H2Z" fill="#fff"/><path d="M6.5 15V21M10 15V21M13.5 15V21" stroke="#4a4e55" stroke-width="1"/></svg>
<svg class="a" style="left:915px;top:96px" width="10" height="15" viewBox="0 0 10 15"><path d="M8.5 1.5L2 7.5L8.5 13.5" stroke="#8d9198" stroke-width="1.8" fill="none"/></svg>
<div class="a" style="left:441px;top:217px;width:398px;height:316px;border-radius:28px;background:#fff;box-shadow:0 4px 8px 3px rgba(0,0,0,.15),0 1px 3px rgba(0,0,0,.3)"></div>
<div class="a" style="left:465.5px;top:244.68px;font-size:24px;line-height:1;white-space:nowrap;color:#1f1f1f;letter-spacing:0.22px">Opciones de columna</div>
<div class="a" style="left:465.5px;top:308.15px;font-size:14px;line-height:1;white-space:nowrap;color:#575757;">Número de columnas</div>
<div class="a" style="left:465.5px;top:360.15px;font-size:14px;line-height:1;white-space:nowrap;color:#575757;">Espaciado (centímetros)</div>
<div class="a" style="left:465.5px;top:412.15px;font-size:14px;line-height:1;white-space:nowrap;color:#575757;">Linea entre columnas</div>
<div class="a" style="left:715px;top:295px;width:100px;height:39px;border:2px solid #2452a8;border-radius:4px;background:#fff"></div>
<div class="a" style="left:730px;top:307.30px;font-size:15px;line-height:1;white-space:nowrap;color:#3c3c3c;">1</div>
<svg class="a" style="left:790px;top:312px" width="8" height="4.5" viewBox="0 0 8 4.5"><path d="M0 4.5H8L4 0Z" fill="#2a3a5a"/></svg>
<div class="a" style="left:714.5px;top:336px;width:113px;height:111px;border-radius:4px;background:#fff;box-shadow:0 2px 6px 2px rgba(0,0,0,.15),0 1px 2px rgba(0,0,0,.3)"></div>
<div class="a" style="left:714.5px;top:343px;width:113px;height:29.5px;background:#e3e3e3"></div>
<div class="a" style="left:714.5px;top:372.5px;width:113px;height:33.5px;background:#ececec"></div>
<div class="a" style="left:714.5px;top:372.5px;width:76px;height:33.5px;background:linear-gradient(90deg,#e1e1e1 62px,#ececec 76px)"></div>
<div class="a" style="left:730px;top:350.30px;font-size:15px;line-height:1;white-space:nowrap;color:#3c3c3c;">1</div>
<div class="a" style="left:730px;top:383.30px;font-size:15px;line-height:1;white-space:nowrap;color:#3c3c3c;">2</div>
<div class="a" style="left:730px;top:415.30px;font-size:15px;line-height:1;white-space:nowrap;color:#3c3c3c;">3</div>
<svg class="a" style="left:738px;top:402px" width="18" height="22" viewBox="0 0 18 22"><path d="M6 1.5Q7.5 0.5 9 1.5V9Q10 8 11.5 8.8Q13 8 14 9.2Q15.5 8.8 16.5 10.5V15Q16.5 19 14 21H7.5Q5.5 19.5 4 17L1 12.5Q0.5 11 2 10.5Q3.5 10.5 6 13V1.5Z" fill="#fff" stroke="#222" stroke-width="1.1" stroke-linejoin="round"/><path d="M9 9V13M11.5 9V13M14 9.5V13" stroke="#222" stroke-width="0.9"/></svg>
<div class="a" style="left:665.5px;top:482.15px;font-size:14px;line-height:1;white-space:nowrap;color:#3864ac;letter-spacing:0.35px;-webkit-text-stroke:0.2px #3864ac">Cancelar</div>
<div class="a" style="left:757.3px;top:482.15px;font-size:14px;line-height:1;white-space:nowrap;color:#3864ac;letter-spacing:0.4px;-webkit-text-stroke:0.2px #3864ac">Aplicar</div>

<!-- TASKBAR -->
<div class="a task"></div>
<div class="a" style="left:20px;top:685px;width:21px;height:21px;border-radius:50%;background:radial-gradient(circle at 40% 35%,#f7b924,#f08a1c)"></div>
<div class="a" style="left:31px;top:679px;width:14px;height:14px;border-radius:50%;background:#f2a6b8;color:#2a1a1a;font-size:10px;line-height:14px;text-align:center">1</div>
<div class="a" style="left:51px;top:681px;font-size:12px;line-height:1;color:#fff;white-space:nowrap">9°C</div>
<div class="a" style="left:51px;top:697px;font-size:12px;line-height:1;color:#ddd;white-space:nowrap">Soleado</div>
<div class="a" style="left:640px;top:686px;width:18px;height:20px;border-radius:50%;background:#5a4aa0"></div>
<div class="a" style="left:676px;top:684px;width:21px;height:22px;border-radius:3px;background:#f2b636"></div>
<div class="a" style="left:680px;top:688px;width:13px;height:14px;border-radius:50%;border:1.5px solid #fff;color:#fff;font-size:10px;line-height:11px;text-align:center;font-weight:700">S</div>
<div class="a" style="left:719.5px;top:685px;width:22px;height:22px;border-radius:50%;background:conic-gradient(from -60deg,#db4437 0 120deg,#f4c20d 120deg 240deg,#0f9d58 240deg 360deg)"></div><div class="a" style="left:725.5px;top:691px;width:10px;height:10px;border-radius:50%;background:#4285f4;border:2px solid #fff;box-sizing:content-box;transform:translate(-2px,-2px)"></div>
<div class="a" style="left:727px;top:712px;width:6px;height:3px;border-radius:2px;background:#a09a9a"></div>
<div class="a" style="left:762px;top:686px;width:24px;height:19px;border-radius:2px;background:#f7c948"></div>
<div class="a" style="left:762px;top:684px;width:10px;height:4px;border-radius:2px 2px 0 0;background:#e8b030"></div>
<div class="a" style="left:767px;top:697px;width:14px;height:8px;background:#1f78d1"></div>
<div class="a" style="left:771px;top:712px;width:6px;height:3px;border-radius:2px;background:#a09a9a"></div>
<svg class="a" style="left:805px;top:686px" width="24" height="18" viewBox="0 0 24 18"><path d="M2 8Q6 2 14 4L20 2L18 6Q22 9 20 13L14 12Q8 15 3 12Z" fill="#7a7470"/><circle cx="9" cy="8" r="2.5" fill="#fff"/><circle cx="9" cy="8" r="1" fill="#000"/><path d="M17 12L22 16" stroke="#ccc" stroke-width="1.5"/></svg>
<svg class="a" style="left:850px;top:684px" width="25" height="25" viewBox="0 0 24 24"><path d="M19.14 12.94c.04-.3.06-.61.06-.94 0-.32-.02-.64-.07-.94l2.03-1.58c.18-.14.23-.41.12-.61l-1.92-3.32c-.12-.22-.37-.29-.59-.22l-2.39.96c-.5-.38-1.03-.7-1.62-.94l-.36-2.54c-.04-.24-.24-.41-.48-.41h-3.84c-.24 0-.43.17-.47.41l-.36 2.54c-.59.24-1.13.57-1.62.94l-2.39-.96c-.22-.08-.47 0-.59.22L2.74 8.87c-.12.21-.8.47.12.61l2.03 1.58c-.05.3-.09.63-.09.94s.02.64.07.94l-2.03 1.58c-.18.14-.23.41-.12.61l1.92 3.32c.12.22.37.29.59.22l2.39-.96c.5.38 1.03.7 1.62.94l.36 2.54c.05.24.24.41.48.41h3.84c.24 0 .44-.17.47-.41l.36-2.54c.59-.24 1.13-.56 1.62-.94l2.39.96c.22.08.47 0 .59-.22l1.92-3.32c.12-.22.07-.47-.12-.61l-2.01-1.58z" fill="#d8d4d0"/><circle cx="12" cy="12" r="3.5" fill="#2a2a2a"/></svg>
<div class="a" style="left:886px;top:674px;width:40px;height:44px;border-radius:4px;background:rgba(255,255,255,0.07)"></div>
<div class="a" style="left:895px;top:685px;width:22px;height:22px;border-radius:50%;background:conic-gradient(from -60deg,#db4437 0 120deg,#f4c20d 120deg 240deg,#0f9d58 240deg 360deg)"></div><div class="a" style="left:901px;top:691px;width:10px;height:10px;border-radius:50%;background:#4285f4;border:2px solid #fff;box-sizing:content-box;transform:translate(-2px,-2px)"></div>
<div class="a" style="left:909px;top:680px;width:14px;height:14px;border-radius:50%;background:#c0391b;color:#fff;font-size:9px;line-height:14px;text-align:center">B</div>
<div class="a" style="left:898px;top:712px;width:16px;height:3px;border-radius:2px;background:#e7a8e0"></div>
<div class="a" style="left:942px;top:684px;width:18px;height:22px;border-radius:2px;background:#52b8e8"></div>
<div class="a" style="left:945px;top:690px;width:12px;height:1.5px;background:#1a5a80;box-shadow:0 4px 0 #1a5a80,0 8px 0 #1a5a80"></div>
<div class="a" style="left:942px;top:704px;width:18px;height:3px;background:#b07a4a"></div>
<div class="a" style="left:948px;top:712px;width:6px;height:3px;border-radius:2px;background:#a09a9a"></div>
<svg class="a" style="left:1023px;top:691px" width="14" height="8" viewBox="0 0 14 8"><path d="M1 7L7 1L13 7" stroke="#fff" stroke-width="1.3" fill="none"/></svg>
<svg class="a" style="left:1053px;top:688px" width="18" height="12" viewBox="0 0 18 12"><path d="M4 12Q0 12 0 8.5Q0 5.5 3.5 5.5Q4.5 1 9 1Q13 1 14 4.5Q18 5 18 8.5Q18 12 14 12Z" fill="#e8e0dc"/></svg>
<svg class="a" style="left:1084px;top:688px" width="18" height="12" viewBox="0 0 18 12"><path d="M4 12Q0 12 0 8.5Q0 5.5 3.5 5.5Q4.5 1 9 1Q13 1 14 4.5Q18 5 18 8.5Q18 12 14 12Z" fill="#1d8ae0"/></svg>
<svg class="a" style="left:1117px;top:688px" width="18" height="14" viewBox="0 0 18 14"><path d="M1 5Q9 -2 17 5M3.5 7.5Q9 3 14.5 7.5M6 10Q9 7.5 12 10" stroke="#fff" stroke-width="1.4" fill="none"/><circle cx="9" cy="12.5" r="1.3" fill="#fff"/></svg>
<svg class="a" style="left:1140px;top:688px" width="16" height="14" viewBox="0 0 16 14"><path d="M1 4.5H4L8 1V13L4 9.5H1Z" stroke="#fff" stroke-width="1.2" fill="none"/><path d="M11 4Q13 7 11 10M13 2Q16 7 13 12" stroke="#8a7a78" stroke-width="1" fill="none"/></svg>
<svg class="a" style="left:1165px;top:687px" width="18" height="15" viewBox="0 0 18 15"><rect x="1" y="3.5" width="13" height="10" rx="1.5" stroke="#fff" stroke-width="1.3" fill="none"/><rect x="14.5" y="6.5" width="2" height="4" fill="#fff"/><path d="M6 1L3.5 8H7L5 13" stroke="#fff" stroke-width="1.2" fill="none"/></svg>
<div class="a" style="left:1180px;top:681px;width:80px;text-align:right;font-size:12px;line-height:1;color:#fff;white-space:nowrap">11:02</div>
<div class="a" style="left:1180px;top:698px;width:80px;text-align:right;font-size:12px;line-height:1;color:#fff;white-space:nowrap">06/11/2023</div>
<div class="a" style="left:94px;top:562px;width:556px;height:158px;background:#ff0000;box-shadow:-1px -1px 3px rgba(0,0,0,.25)"></div>
<div class="a" style="left:112px;top:576.68px;font-size:24px;line-height:1;white-space:nowrap;color:#fff;letter-spacing:0.55px;-webkit-text-stroke:0.35px #fff">Le pongo :</div>
<div class="a" style="left:112px;top:612.18px;font-size:24px;line-height:1;white-space:nowrap;color:#fff;letter-spacing:0.55px;-webkit-text-stroke:0.35px #fff">-2 columnas.</div>
<div class="a" style="left:112px;top:647.68px;font-size:24px;line-height:1;white-space:nowrap;color:#fff;letter-spacing:0.25px;-webkit-text-stroke:0.35px #fff">-Separación dejo 1,27</div>
<div class="a" style="left:112px;top:683.18px;font-size:24px;line-height:1;white-space:nowrap;color:#fff;letter-spacing:0.55px;-webkit-text-stroke:0.35px #fff">-Con linea entre columnas</div>

</body></html>
